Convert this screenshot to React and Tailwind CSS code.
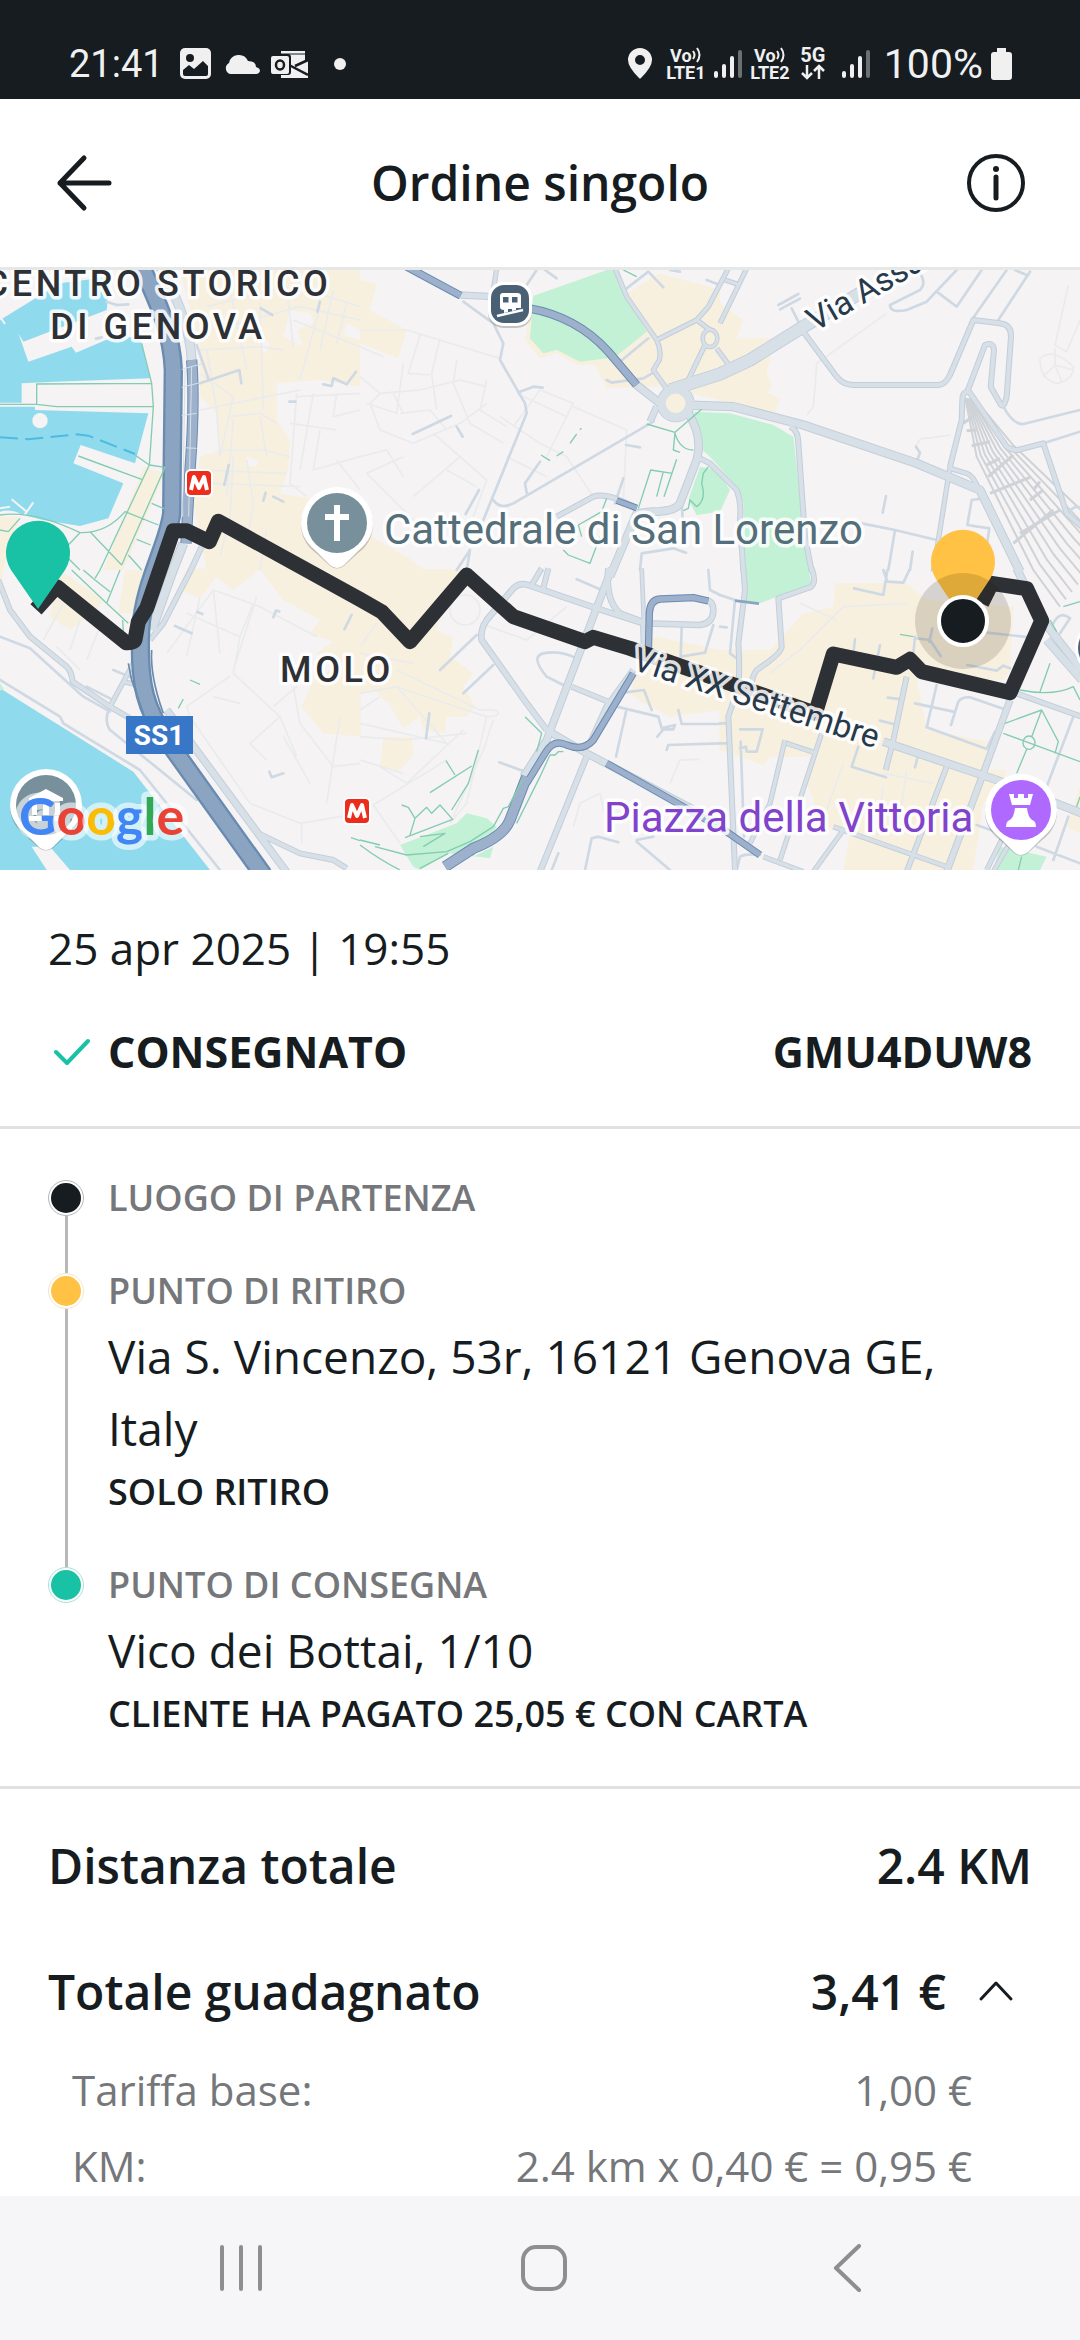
const A = [0, 0];
const B = [1080, 0];
const C = [2160, 0];
const D = [0, 900];
const E = [1080, 900];
const F = [2160, 900];

const water = [
  [A, "M0,150 L180,40 L330,20 L320,120 L70,215 L55,190 L85,275 L215,230 L228,248 L330,205 L420,200 L450,325 L165,335 L65,340 L65,398 L0,398Z"],
  [A, "M0,410 L105,410 L105,420 L445,430 L405,580 L242,525 L220,580 L370,640 L325,745 L240,768 L130,750 L70,735 Q30,715 0,725Z"],
  [D, "M0,355 L400,605 L630,900 L210,900 L150,830 L95,830 L140,900 L0,900Z"],
];

const commercial = [
  [A, "M540,0 L1080,0 L1080,350 L960,330 L830,340 L830,450 L870,510 L865,600 L840,670 L950,690 L1080,760 L1080,900 L620,900 L580,700 L600,560 L660,540 L650,430 L600,380 L600,230Z"],
  [A, "M430,590 L495,610 L370,900 L310,900Z"],
  [A, "M0,740 L60,740 L20,850 L0,960Z"],
  [B, "M-2,30 L50,40 L30,120 L140,180 L115,265 L-2,220Z"],
  [B, "M0,780 L140,860 L200,905 L0,905Z"],
  [B, "M520,75 L770,0 L800,70 L900,10 L1080,60 L1080,390 L900,350 L740,355 L705,285 L650,285 L590,250 L540,265 L495,210Z"],
  [C, "M-2,100 L70,150 L50,205 L165,205 L140,310 L155,345 L145,370 L180,385 L165,430 L-2,400Z"],
  [D, "M180,0 L310,90 L280,130 L210,180 L150,140Z"],
  [D, "M375,0 L430,0 L395,130 L355,130Z"],
  [D, "M560,-5 L780,-5 L740,30 L700,60 L650,20 L600,85 L540,60Z"],
  [D, "M780,-2 L1082,-2 L1082,500 L970,490 L905,410 L940,330 L1010,290 L950,250 L1000,215 L930,190 L960,150 L850,90Z"],
  [E, "M-2,-2 L310,-2 L260,90 L230,180 L280,205 L270,260 L340,310 L310,350 L345,410 L320,440 L260,440 L255,490 L190,480 L180,440 L130,475 L85,400 L40,360 L-2,370Z"],
  [E, "M70,500 L155,500 L160,555 L120,600 L60,595Z"],
  [E, "M860,210 L890,200 L1082,240 L1082,420 L930,440 L850,400 L810,370Z"],
  [F, "M345,40 L560,40 L620,90 L880,110 L870,300 L850,330 L590,320 L620,480 L830,520 L790,600 L860,600 L850,640 L790,700 L760,900 L370,900 L390,790 L310,770 L260,640 L270,560 L150,560 L130,585 L-2,540 L-2,240 L150,240 L250,130 L340,110Z"],
  [F, "M1040,770 L1080,650 L1080,790Z"],
];

const parks = [
  [B, "M520,78 L740,0 L760,0 L860,185 L765,262 L660,275 L590,240 L550,250 L510,205Z"],
  [B, "M1000,425 L1110,430 L1240,465 L1300,500 L1340,860 L1355,950 L1250,980 L1200,1000 L1160,995 L1150,700 L1130,650 L1050,560 L1015,530Z"],
  [B, "M1020,590 L1070,600 L1110,660 L1080,725 L1010,735 L985,690Z"],
  [E, "M120,825 L290,760 L320,730 L380,745 L410,770 L340,860 L400,830 L390,865 L265,850 L180,900 L160,890Z"],
  [F, "M840,830 L980,860 L960,900 L820,900Z"],
  [D, "M0,340 L12,358 L0,362Z"],
];

const lanes = [
  [A, "M620,110 L860,50 M640,180 L900,110 L1080,150 M600,240 L780,230 L850,240 M690,60 L740,300 M780,100 L790,420 M860,50 L880,230 M960,110 L900,330 M600,310 L700,380 L660,560 M690,440 L780,430 L830,460 M660,540 L790,540 L870,560 M700,450 L680,680 M780,440 L800,560 M600,420 L900,360 M600,600 L860,610 M640,640 L900,650 M700,560 L690,740 M740,570 L760,700 M890,370 L870,640 M940,370 L900,600 M890,380 L1080,370 M1010,370 L1000,440 L1080,420 M870,460 L1010,480 M960,480 L940,600 L1080,560 M1010,570 L1080,660 M870,640 L920,680 M760,700 L740,820 M690,740 L660,860 M800,780 L780,900 M620,240 L650,420 L660,560"],
  [A, "M880,150 L1080,230 M920,60 L1080,110 M1000,60 L960,240 M1040,100 L1010,220"],
  [B, "M0,180 L140,180 L420,265 M180,195 L145,310 L210,315 M240,205 L215,310 L230,420 M0,320 L60,370 L180,360 L300,330 L380,350 M60,370 L30,400 L60,480 L160,520 M120,430 L210,420 L260,480 M20,400 L110,430 L130,280 M0,560 L80,540 L130,620 M100,370 L130,430 M290,270 L280,340 L330,460 L430,520 M380,330 L360,420 L440,470 M160,520 L300,460 L380,400 M220,490 L380,630 L340,740 M160,680 L300,560 M130,560 L20,610 L170,760 M420,440 L540,520 M470,370 L620,440 L640,400 L540,360 L460,470 M540,520 L620,560 L700,680 M620,440 L560,560 M640,410 L800,480 L790,690 L840,720 M260,600 L350,650 M440,560 L560,620 M0,230 L70,260"],
  [C, "M500,130 L290,280 L285,350 L280,410 L260,435 M590,540 Q590,500 620,505 L690,495 M960,265 Q1000,230 1060,290 Q1060,330 1010,340 Q960,330 960,265 M1005,285 L1005,235 M1005,285 L1060,300 M1005,285 L970,320 M1005,285 L1025,335 M1045,45 L1005,225 L1040,245 L1080,150"],
  [D, "M500,250 L640,60 L780,110 L950,200 M560,130 L720,200 L760,100 M600,80 L560,260 M640,60 L660,250 M720,200 L700,310 L840,440 L890,560 M690,318 L560,410 L570,440 L750,700 L900,760 L1080,730 M640,380 L720,400 M840,440 L750,520 L800,570 M850,500 L930,640 M770,80 L700,300 M820,410 L890,350 L860,270 M880,350 L900,460 L1000,590 L1080,580 M1020,440 L980,700 M905,760 L905,820 M190,100 L130,210 M240,150 L210,240 M170,230 L240,300 M300,170 L260,270"],
  [E, "M0,370 L110,350 L380,440 L320,700 L270,760 M110,350 L260,520 L0,460 M0,500 L130,510 L320,490 M0,420 L60,380 M400,450 L370,540 L280,740 M60,590 L140,640 L310,480 M0,570 L130,610 M40,705 L260,570 M40,705 L120,820 M380,440 Q410,440 415,430 Q415,415 360,420 L110,300 M0,250 L160,280 M50,160 L0,230 M270,120 A45 45 0 1 0 360,120 A45 45 0 1 0 270,120 M360,160 L500,210 L620,110 M640,770 L660,700 L720,670 L740,760 M930,640 L960,570 L1020,568"],
  [F, "M240,240 L370,110 L560,100 M150,310 L250,230 M240,100 L350,150 M490,610 L640,640 M490,650 L470,800 M560,600 L540,740 M370,580 L320,720"],
];

const thin = [
  [A, "M320,95 L350,105 L385,103 M600,340 L718,300 L724,340 M590,225 L625,325 M970,343 L995,348 L1000,325 L1040,343 L1068,305 M783,115 L817,135 M960,95 L952,125 M868,395 L886,395 M686,585 L673,645 M797,668 L790,692 M820,680 L850,695 M288,206 L305,202"],
  [B, "M310,95 L400,160 L430,220 L420,270 L495,400 L500,430 L370,750 M400,690 Q420,720 460,700 L880,455 M480,365 L520,350 L548,353 M540,575 L495,640 L500,668 M158,492 L273,438 M290,470 L308,500 M317,732 L357,660 M798,525 L840,532 M790,625 L765,700 M780,275 L865,205 M740,330 L755,338 L850,325 L885,305 M800,55 L865,5 L910,52 M500,45 L530,0 M555,0 L590,25 M840,900 L845,850 L940,835 L978,848 M965,700 L968,745 M930,0 L960,5 M1040,30 L1080,45 M290,900 L330,840 M320,900 L330,840"],
  [C, "M850,410 Q880,465 910,462 L1080,420 M970,520 L1080,485 M650,65 L710,110 L785,0 M510,105 Q510,130 560,120 L620,95 L710,0 M510,105 L600,60 Q620,40 600,10 M755,150 L860,0 M835,150 L930,5 M885,0 L920,15 M590,575 L600,548 L588,530 M498,678 L488,728 M425,760 L525,780 L650,810 M525,780 L505,900 M578,845 L570,900 M808,775 L742,765 L755,690 L790,685 M808,775 L800,830 M215,115 L240,165 M175,105 L235,72 M180,118 L240,86 M1045,730 Q1060,705 1080,712"],
  [D, "M0,200 L90,235 L250,380 L330,425 M0,330 L180,440 L190,460 L420,600 L660,900 M330,410 Q310,450 330,480 L430,560 L590,690 M260,350 L330,385 M340,300 L400,325 M525,168 L575,190 M592,126 L607,132 M820,142 L828,122 L838,124 M1055,135 L1033,178 M808,605 L815,622 L850,610"],
  [E, "M610,345 L560,320 Q510,260 550,250 Q600,240 650,265 M240,300 L350,195 M310,370 L400,285 M208,430 L198,505 M418,577 L500,607 M650,28 L720,58 M798,425 L768,560 M770,410 L895,440 L905,475 L945,465 L940,478 L910,478 L892,500 M790,368 L852,360 L875,420 M955,420 L965,462 L1080,462 M920,540 L925,525 L1080,520 M965,175 L962,260 L1035,248 L1060,165 M675,900 L695,805 L715,800 L775,817 M830,815 L930,900 M830,810 L880,800 M595,850 L575,900 M1045,0 L1050,60 L1080,75"],
  [F, "M490,0 L502,35 L550,38 L568,0 M402,55 L490,75 L502,0 M405,208 L400,250 M480,225 L460,325 M585,200 L575,300 M590,205 L630,210 L662,258 M637,175 L628,215 M742,285 L830,302 L850,287 L870,295 M800,188 L940,203 M503,383 L545,388 M585,400 L700,425 M693,465 L715,395 Q725,380 750,382 L860,420 M650,345 L620,472 L800,537 L825,485 M480,452 L520,462 M395,590 L498,622 M415,530 L395,590 M592,565 L585,592 M60,478 L128,478 L110,545 L80,545 L78,530 L60,535 M62,515 L72,800 M1060,440 L980,650 M770,765 L840,790 M950,830 L1080,880 M1045,740 L1000,870 M0,75 L45,90 L30,250 L50,265 M0,170 L20,172 M0,460 L20,460 M0,520 L20,520 M50,900 L60,860 Q80,850 120,855 M1000,160 Q1020,120 1050,145 L1020,190"],
];

const roads = [
  [16, B, "M1010,560 L1050,580 L1130,660 Q1145,700 1140,750 L1150,905"],
  [16, F, "M70,-5 L75,60 L55,220 Q60,300 55,350 L25,440 L45,900"],
  [14, B, "M410,-5 L400,60"],
  [14, B, "M765,-5 L800,80 L890,210 Q905,240 898,270 L880,300 L930,370"],
  [14, B, "M890,210 L1010,150 L1045,110 L1105,-5"],
  [14, B, "M1010,150 L1050,180 M1035,225 L970,360 M1070,235 L1110,290"],
  [12, B, "M1028,205 A22 26 0 1 0 1072,205 A22 26 0 1 0 1028,205"],
  [14, B, "M1160,-5 L1080,160 M1095,30 L1140,45"],
  [16, B, "M590,740 L700,680 Q740,665 830,715"],
  [20, B, "M400,80 L300,75"],
  [16, C, "M250,185 L350,320 Q370,345 400,345 L655,345 Q675,345 690,315 L760,150 L840,160 Q875,165 873,200 L860,380 Q850,420 840,400 L812,350 L822,240 Q820,215 795,225 L740,370"],
  [16, C, "M690,590 L725,450 L727,390 Q728,362 748,366 L860,530 Q880,545 900,538 L970,520 L1040,730 L1085,770"],
  [14, C, "M690,590 L640,905 M690,595 L740,610 Q765,620 775,660"],
  [16, C, "M210,470 Q235,480 235,520 L255,800 L275,905"],
  [16, F, "M275,-5 Q295,50 260,55 L175,85 L185,230 Q185,250 110,300 Q95,320 95,350"],
  [26, C, "M-110,405 L40,410 L250,465 L590,580 L780,660 L900,905"],
  [24, F, "M890,-5 L960,140 L1085,300 M980,210 L1085,330"],
  [38, C, "M-150,360 L0,312 L90,270 L250,170 L420,70"],
  [24, B, "M830,345 L900,400"],
  [24, B, "M985,430 Q1030,500 1010,570 L960,700 Q945,725 880,725 L830,730 L750,920"],
  [20, B, "M870,455 L890,410"],
  [22, E, "M755,-5 L700,140 L560,510 L490,620"],
  [18, E, "M680,560 L540,905"],
  [18, E, "M560,480 L500,400 L365,210 Q360,180 380,150 L460,55 Q480,35 510,47 L710,115 L850,160"],
  [22, E, "M560,480 L680,550 L1080,760"],
  [16, E, "M635,350 L745,395 M565,-5 L550,55 M545,-5 L515,45 M660,0"],
  [18, E, "M745,-5 Q735,90 780,130 L860,160 L1020,165 Q1060,160 1060,120 Q1060,95 1040,90"],
  [18, E, "M850,160 L852,230 M820,300 L740,410 L690,520"],
  [12, E, "M845,-5 L852,160"],
  [24, F, "M490,515 L830,630 L1085,730"],
  [16, F, "M560,320 L520,510 L497,600"],
  [20, F, "M870,390 L790,610 L680,905"],
  [16, F, "M680,590 L560,905 M875,365 L1085,440"],
  [14, F, "M305,490 L180,870 M200,520 L290,550 M195,510 L150,700 L90,820 M370,780 L280,905"],
  [14, F, "M340,770 L680,890 M130,860 L250,905 M880,800 L820,905 M800,900 L860,780"],
  [16, D, "M-5,30 L30,120 L90,200 L200,290 Q215,305 218,335 L330,410 L390,445"],
  [14, D, "M400,280 L330,410 M370,335 L405,343"],
  [16, D, "M775,790 L900,850 L1000,870 L1040,895"],
  [16, A, "M605,830 L575,895 L490,1060 L450,1110"],
  [28, A, "M480,-10 Q570,150 575,270 M550,820 L515,910 L455,1080"],
  [22, D, "M500,420 L870,920"],
];

const highways = [
  [34, "#9db1cc", A, "M575,270 Q585,400 570,600 L558,820"],
  [58, "#8aa4c1", A, "M425,-10 C470,90 515,180 520,300 L515,730 C505,820 430,940 422,1080 C415,1250 440,1320 500,1410 L790,1815"],
  [24, "#9db1cc", B, "M140,-10 L302,77"],
  [26, "#9db1cc", B, "M505,115 Q650,140 745,245 L830,345"],
  [20, "#9db1cc", B, "M770,692 L830,714"],
  [22, "#9db1cc", E, "M865,250 L868,130 Q870,90 900,87 L1000,83 L1045,93"],
  [22, "#9db1cc", E, "M820,310 L700,510 Q670,545 620,525 Q580,505 555,550 L500,640"],
  [34, "#9db1cc", E, "M500,620 L450,750 Q430,800 340,835 L255,890"],
  [22, "#9db1cc", E, "M740,580 L1085,775 L1200,855"],
];

const paths = [
  [A, "M0,403 L110,403 L170,410 L460,410 L455,340 L425,220 M110,403 L110,342 L455,340 M460,410 L448,585 L300,900 M235,558 L425,628 M448,585 L495,592 L365,885 M448,585 L405,555 M0,735 Q100,720 240,788 Q320,790 375,725 L475,765 M270,785 L365,885 M240,788 L200,830 M455,700 L492,716 M410,808 L452,825 M385,855 L425,900 M200,860 L240,900 M0,780 L25,785 L60,745"],
  [D, "M215,0 L320,100 L385,160 M250,0 L285,30 L330,65 M360,0 L320,100 M300,0 L285,25 M368,150 L370,185 M570,330 L600,343 M550,387 L535,415 M1053,803 L1080,812"],
  [B, "M860,462 L945,487 L1025,418 M945,487 L940,540 L960,547 M945,490 Q960,540 1000,540 M835,715 L872,600 L937,610 M950,568 L912,680 M910,605 L890,680 M740,685 L725,725 L655,765 L665,800 M610,840 L625,855 L690,880 L720,800 M543,555 L570,572 M590,558 L610,545 M630,520 L650,492 M660,480 L664,474 M1045,590 L1030,610 L1025,640 Q1040,690 1010,710 L990,690 L985,715 L970,722 M790,0 L830,20"],
  [E, "M495,440 L545,490 L530,545 M355,540 L325,640 L275,720 M210,668 L335,588 M258,572 L285,615 M125,705 L145,712 L165,745 L200,712 L215,730 L240,705 L278,748 L135,803 M165,745 L150,795 M0,810 L60,825 M45,830 L140,855 L260,845 L330,815 L400,770 L430,715 L445,710 L490,625 M180,895 L265,850 M0,825 Q60,870 120,900 M180,800 L255,790 L190,830 M610,545 L595,545 L585,555 L570,555 L540,620 L470,760"],
  [F, "M850,490 L1080,575 M855,460 L965,420 L1015,515 L1005,550 M965,420 L935,500 M909,518 A18 20 0 1 0 945,518 A18 20 0 1 0 909,518 M920,538 L890,610 M900,360 Q1000,380 1060,350 L1080,390 M990,280 L960,365 M1030,110 L1080,95 M990,150 L1010,185 M540,193 L580,200 M905,860 L895,900 M1080,680 L1070,710"],
];

const at = (t) => `translate(${t[0]} ${t[1]})`;

function Layer({ items, ...rest }) {
  return (
    <g {...rest}>
      {items.map(([t, d], i) => (
        <path key={i} transform={at(t)} d={d} />
      ))}
    </g>
  );
}

function PoiPin({ x, y, color, children }) {
  return (
    <g transform={`translate(${x} ${y})`}>
      <path d="M-36,2 a36 36 0 1 1 72 0 c0 14 -8 23 -16 29 L7,43 q-7 5 -14 0 L-20,31 C-28,25 -36,16 -36,2Z" fill="#0003" />
      <path d="M-36,0 a36 36 0 1 1 72 0 c0 14 -8 22 -16 29 L7,42 q-7 6 -14 0 L-20,29 C-28,22 -36,14 -36,0Z" fill="#fff" />
      <circle r="30" fill={color} />
      {children}
    </g>
  );
}

function Metro({ x, y }) {
  return (
    <g transform={`translate(${x} ${y})`}>
      <rect x="-14" y="-14" width="28" height="28" rx="6" fill="#fff" />
      <rect x="-12" y="-12" width="24" height="24" rx="4" fill="#ec2d1b" />
      <path d="M-8,7 L-5,-6 L0,5 L5,-6 L8,7" fill="none" stroke="#fff" strokeWidth="4" strokeLinejoin="round" />
    </g>
  );
}

function RouteMap() {
  const rails = [0, 1, 2, 3, 4, 5, 6, 7, 8, 9];
  return (
    <svg viewBox="0 0 1080 600" className="block w-full" role="img" aria-label="Mappa del percorso">
      <rect width="1080" height="600" fill="#f5f3f4" />
      <g transform="scale(0.33333333)" strokeLinejoin="round">
        <Layer items={water} fill="#90daee" />
        <circle cx="120" cy="452" r="23" fill="#f5f3f4" />
        <path d="M0,502 L85,508 L230,493 L265,497 L405,552" fill="none" stroke="#4dbbe0" strokeWidth="6" strokeDasharray="54 22" />
        <path d="M35,688 L80,725 M100,697 L70,740 M0,715 L30,710 M0,140 L15,162" fill="none" stroke="#f5f3f4" strokeWidth="6" />
        <Layer items={commercial} fill="#f8f0df" />
        <path d="M870,120 L930,130 L940,160 L890,180 L910,230 L850,200Z M740,560 L775,570 L770,590 L735,585Z M780,200 L810,220 L800,250 L780,240Z M1040,160 L1080,180 L1080,210 L1030,195Z" fill="#f5f3f4" />
        <Layer items={parks} fill="#c3f1d5" />
        <Layer items={lanes} fill="none" stroke="#e9ebed" strokeWidth="5" />
        <g fill="none" stroke="#cfd2d6" strokeWidth="6">
          {rails.map((i) => (
            <path key={i} d={`M${2896 + i * 3},385 L${2930 + i * 12},${560 - i * 4} L${3100 + i * 20},${900 - i * 16} L${3180 + i * 18},${1010 - i * 22}`} />
          ))}
          <path d="M2890,460 L2930,432 M2900,482 L2930,480 M2915,527 L2970,515 M2960,585 L3000,565 M2965,620 L3040,555 M2970,670 L3090,622 M3090,690 L3130,660 M3040,820 L3160,720 M3060,790 L3180,720 M3100,660 L3120,635" strokeWidth="9" />
        </g>
        <Layer items={thin} fill="none" stroke="#cfd9e3" strokeWidth="8" strokeLinecap="round" />
        <g fill="none" stroke="#c3cedb">
          {roads.map(([w, t, d], i) => (
            <path key={i} transform={at(t)} d={d} strokeWidth={w + 2} />
          ))}
          <circle cx="2027" cy="400" r="42" strokeWidth="30" />
        </g>
        <g fill="none" stroke="#d7e0e7">
          {roads.map(([w, t, d], i) => (
            <path key={i} transform={at(t)} d={d} strokeWidth={w - 4} />
          ))}
          <circle cx="2027" cy="400" r="42" strokeWidth="25" fill="#f8f0df" />
        </g>
        <g fill="none">
          {highways.map(([w, c, t, d], i) => (
            <path key={i} transform={at(t)} d={d} strokeWidth={w} stroke="#6a8bb0" />
          ))}
          {highways.map(([w, c, t, d], i) => (
            <path key={i} transform={at(t)} d={d} strokeWidth={w > 40 ? w - 14 : w - 6} stroke={c} />
          ))}
        </g>
        <path d="M545,298 L610,280 M545,352 L600,338 M545,437 L590,430 M548,533 L590,535 M555,300 L548,740 M575,290 L566,740" fill="none" stroke="#d7e0e7" strokeWidth="3" />
        <path d="M385,1180 L395,1230 L430,1330 M455,1140 Q450,1220 490,1330" fill="none" stroke="#6a8bb0" strokeWidth="5" />
        <path d="M2205,992 L2277,1001" fill="none" stroke="#8aa4c1" strokeWidth="8" />
        <Layer items={paths} fill="none" stroke="#83ccb2" strokeWidth="4" />
        <path
          d="M108,1018 L170,950 L378,1118 Q405,1120 406,1104 L415,1055 L440,1015 L520,782 L560,782 L628,815 L655,754 L1080,988 L1145,1025 L1230,1115 L1400,915 L1540,1040 L1755,1115 L1780,1102 L1890,1135 L2446,1330 L2500,1152 L2690,1192 L2730,1168 L2765,1205 L3030,1268 L3125,1052 L3080,956 L2975,940 L2945,1000"
          fill="none"
          stroke="#2d3034"
          strokeWidth="45"
        />
      </g>

      <g fill="none" stroke="#ffffffd9" strokeWidth="7" strokeLinejoin="round" className="font-['Roboto',sans-serif]" style={{ paintOrder: "stroke" }}>
        <g fill="#2d3034" fontSize="36" fontWeight="500" textAnchor="middle" className="tracking-widest">
          <text x="158" y="26">CENTRO STORICO</text>
          <text x="158" y="69">DI GENOVA</text>
          <text x="337" y="412">MOLO</text>
        </g>
        <g fontSize="42">
          <text x="384" y="274" fill="#546e7a">Cattedrale di San Lorenzo</text>
          <text x="604" y="562" fill="#8142cc">Piazza della Vittoria</text>
        </g>
        <g fill="#28394a" fontSize="33">
          <text transform="translate(631 399) rotate(18)">Via XX Settembre</text>
          <text transform="translate(815 62) rotate(-30)">Via Assa</text>
        </g>
      </g>

      <rect x="126" y="446" width="67" height="38" fill="#3877c8" />
      <text x="159" y="475" textAnchor="middle" fontSize="28" fontWeight="700" fill="#fff" className="font-['Roboto',sans-serif]">SS1</text>

      <Metro x={199} y={213} />
      <Metro x={357} y={541} />

      <g transform="translate(510 34)">
        <rect x="-22" y="-20" width="44" height="44" rx="15" fill="#0003" />
        <rect x="-22" y="-22" width="44" height="44" rx="15" fill="#fff" />
        <rect x="-19" y="-19" width="38" height="38" rx="13" fill="#4a6175" />
        <path d="M-10,-8 q0,-3 3,-3 h14 q4,0 4,3 v12 h-5 v2 l-4,1 v-2 h-4 v3 l-4,1 v-3 q-4,0 -4,-3Z" fill="#fff" />
        <path d="M-7,-7 h5.500 v5.500 h-5.500Z M2,-7 h5.500 v5.500 h-5.500Z" fill="#4a6175" />
        <path d="M-13,12 L13,6" stroke="#fff" strokeWidth="2.500" />
      </g>

      <PoiPin x={337} y={253} color="#78909c">
        <path d="M-3,-18 h6 v9 h9 v6 h-9 v21 h-6 v-21 h-9 v-6 h9Z" fill="#fff" />
      </PoiPin>
      <PoiPin x={1021} y={540} color="#b069ff">
        <path d="M-12,-16 h5 v4 h4 v-4 h6 v4 h4 v-4 h5 l-3,11 h-18Z M-6,-2 h12 q1,9 5,12 q4,1 4,7 h-30 q0,-6 4,-7 q4,-3 5,-12Z" fill="#fff" />
      </PoiPin>
      <PoiPin x={46} y={535} color="#78909c">
        <path d="M0,-16 L17,-7 V-4 H-17 V-7Z M-14,-2 h5 v12 h-5Z M-3,-2 h6 v12 h-6Z M9,-2 h5 v12 h-5Z M-17,11 h34 v5 h-34Z" fill="#fff" />
      </PoiPin>
      <circle cx="1103" cy="378" r="28" fill="#fff" />
      <circle cx="1103" cy="378" r="25" fill="#4a6175" />

      <path d="M38,339 L11,300 A32 32 0 1 1 65,300Z" fill="#19c2a4" />
      <path d="M963,350 L936,309 A32 32 0 1 1 990,309Z" fill="#ffc244" />
      <circle cx="963" cy="351" r="48" fill="#29190026" />
      <circle cx="963" cy="351" r="24" fill="#161c20" stroke="#fff" strokeWidth="4" />

      <text x="19" y="565" fontSize="52" fontWeight="700" stroke="#ffffff99" strokeWidth="11" strokeLinejoin="round" style={{ paintOrder: "stroke" }} className="font-['Lato',sans-serif]">
        <tspan fill="#4285f4">G</tspan>
        <tspan fill="#ea4335">o</tspan>
        <tspan fill="#fbbc05">o</tspan>
        <tspan fill="#4285f4">g</tspan>
        <tspan fill="#34a853">l</tspan>
        <tspan fill="#ea4335">e</tspan>
      </text>
    </svg>
  );
}

function SignalBars() {
  return (
    <svg viewBox="0 0 28 32" className="h-8 w-7" fill="none" strokeWidth="4" strokeLinecap="round" stroke="#f0f0f0" aria-hidden="true">
      <path d="M2,25 V28 M10,18 V28 M18,10 V28" />
      <path d="M26,4 V28" stroke="#6b7073" />
    </svg>
  );
}

function VoLte({ n }) {
  return (
    <div className="flex w-10 flex-col items-center text-[18px] leading-[17px] font-bold">
      <span className="flex items-center">
        Vo
        <svg viewBox="0 0 10 16" className="h-4 w-[10px]" fill="none" stroke="currentColor" strokeWidth="2" aria-hidden="true">
          <path d="M1,4 Q4,8 1,12 M5,1 Q10,8 5,15" />
        </svg>
      </span>
      <span>LTE{n}</span>
    </div>
  );
}

function StatusBar() {
  return (
    <div className="flex h-[99px] shrink-0 items-center justify-between bg-[#161c20] pt-7 pr-[68px] pl-[69px] font-['Roboto',sans-serif] text-[#f0f0f0]">
      <div className="flex items-center">
        <span className="mr-4 text-[38px] leading-8">21:41</span>
        <svg viewBox="0 0 31 31" className="mr-[13px] h-[31px] w-[31px]" aria-hidden="true">
          <rect width="31" height="31" rx="5" fill="#f0f0f0" />
          <circle cx="10" cy="10" r="4" fill="#161c20" />
          <path d="M3,22 L9,17 L14,21 L23,13 L28,18 V26 Q28,28 26,28 H5 Q3,28 3,26Z" fill="#161c20" />
        </svg>
        <svg viewBox="0 0 36 20" className="mr-[11px] h-5 w-9" fill="#f0f0f0" aria-hidden="true">
          <path d="M6,20 A6 6 0 0 1 5,9 A10 10 0 0 1 24,7 Q32,7 32,13 Q36,14 36,17 Q35,20 32,20Z" />
        </svg>
        <svg viewBox="0 0 37 30" className="h-[30px] w-[37px]" aria-hidden="true">
          <path d="M10,2 H34 V13 L37,12 V29 H10Z" fill="#f0f0f0" />
          <path d="M10,5 H34" stroke="#161c20" strokeWidth="1" />
          <path d="M37,11 L24,17 M18,16 L37,26" stroke="#161c20" strokeWidth="2.500" />
          <rect x="-1" y="5" width="21" height="21" rx="3" fill="#161c20" />
          <rect x="0" y="7" width="18" height="18" rx="2" fill="#f0f0f0" />
          <ellipse cx="9" cy="16" rx="4" ry="4.500" fill="none" stroke="#161c20" strokeWidth="2.500" />
        </svg>
        <span className="ml-[26px] h-3 w-3 rounded-full bg-[#f0f0f0]" />
      </div>
      <div className="flex items-center">
        <svg viewBox="0 0 24 31" className="mr-[14px] h-[31px] w-6" aria-hidden="true">
          <path fillRule="evenodd" d="M12,0 A12 12 0 0 1 24,12 Q24,19 13,30 Q12,31 11,30 Q0,19 0,12 A12 12 0 0 1 12,0Z M12,7 A5 5 0 1 0 12,17 A5 5 0 1 0 12,7Z" fill="#f0f0f0" />
        </svg>
        <VoLte n={1} />
        <span className="ml-2"><SignalBars /></span>
        <span className="ml-2"><VoLte n={2} /></span>
        <div className="ml-[10px] flex w-[26px] flex-col items-center text-[20px] leading-[17px] font-bold">
          <span>5G</span>
          <svg viewBox="0 0 24 16" className="h-4 w-6" fill="none" stroke="currentColor" strokeWidth="2.500" aria-hidden="true">
            <path d="M6,1 V14 M1,9 L6,14 L11,9 M18,15 V2 M13,7 L18,2 L23,7" />
          </svg>
        </div>
        <span className="mr-[14px] ml-4"><SignalBars /></span>
        <span className="mr-2 text-[41px] leading-8">100%</span>
        <svg viewBox="0 0 21 32" className="h-8 w-[21px]" fill="#f0f0f0" aria-hidden="true">
          <path d="M6,0 H15 V4 H18 Q21,4 21,7 V29 Q21,32 18,32 H3 Q0,32 0,29 V7 Q0,4 3,4 H6Z" />
        </svg>
      </div>
    </div>
  );
}

const stops = [
  { label: "LUOGO DI PARTENZA", dot: "bg-[#161c20]", ring: "border-[#b5b7b9]" },
  { label: "PUNTO DI RITIRO", dot: "bg-[#ffc244]", ring: "border-[#f3e6cb]", address: "Via S. Vincenzo, 53r, 16121 Genova GE, Italy", note: "SOLO RITIRO" },
  { label: "PUNTO DI CONSEGNA", dot: "bg-[#19c2a4]", ring: "border-[#a5e3d8]", address: "Vico dei Bottai, 1/10", note: "CLIENTE HA PAGATO 25,05 € CON CARTA" },
];

function Stop({ stop, last }) {
  return (
    <li className="flex gap-6">
      <div className="flex w-9 shrink-0 flex-col items-center">
        <span className={`flex h-9 w-9 items-center justify-center rounded-full border bg-white ${stop.ring}`}>
          <span className={`h-[30px] w-[30px] rounded-full ${stop.dot}`} />
        </span>
        {!last && <span className="w-[3px] flex-1 bg-[#b9b9b9]" />}
      </div>
      <div className={last ? "flex-1" : stop.address ? "flex-1 pb-[47px]" : "flex-1 pb-[57px]"}>
        <h2 className="text-[36px] leading-9 font-semibold text-[#75777a]">{stop.label}</h2>
        {stop.address && (
          <>
            <p className="mt-[11px] text-[46px] leading-[72px]">{stop.address}</p>
            <p className="text-[36px] leading-[56px] font-semibold">{stop.note}</p>
          </>
        )}
      </div>
    </li>
  );
}

export default function App() {
  return (
    <div className="flex h-screen flex-col overflow-hidden bg-white font-['Open_Sans',sans-serif] text-[#161c20]">
      <StatusBar />
      <header className="flex h-[171px] shrink-0 items-center justify-between border-b-3 border-[#e5e8e7] px-[54px]">
        <button type="button" aria-label="Indietro" className="flex h-[60px] w-[60px] items-center justify-center">
          <svg viewBox="0 0 60 60" className="h-[60px] w-[60px]" fill="none" stroke="currentColor" strokeWidth="5" strokeLinecap="round" strokeLinejoin="round">
            <path d="M55,30 H6 M30,5 L6,30 L30,55" />
          </svg>
        </button>
        <h1 className="text-[48px] leading-[64px] font-semibold">Ordine singolo</h1>
        <button type="button" aria-label="Informazioni" className="flex h-[60px] w-[60px] items-center justify-center">
          <svg viewBox="0 0 60 60" className="h-[60px] w-[60px]" fill="none" stroke="currentColor" strokeWidth="5" strokeLinecap="round">
            <circle cx="30" cy="30" r="27" strokeWidth="4" />
            <path d="M30,24 V45" />
            <circle cx="30" cy="16" r="3" fill="currentColor" stroke="none" />
          </svg>
        </button>
      </header>

      <main className="min-h-0 flex-1 overflow-hidden">
        <RouteMap />

        <section className="border-b-3 border-[#e1e1e1] px-12 pt-[46px] pb-[42px]">
          <p className="text-[44px] leading-[64px]">25 apr 2025 | 19:55</p>
          <div className="mt-10 flex h-16 items-center text-[43px] font-bold">
            <svg viewBox="0 0 36 40" className="mr-[18px] ml-[6px] h-10 w-9" fill="none" stroke="#19c2a4" strokeWidth="4" strokeLinecap="round" strokeLinejoin="round" aria-hidden="true">
              <path d="M2,20 L13,31 L34,9" />
            </svg>
            <span className="flex-1">CONSEGNATO</span>
            <span>GMU4DUW8</span>
          </div>
        </section>

        <ol className="border-b-3 border-[#e1e1e1] px-12 pt-[51px] pb-11">
          {stops.map((stop, i) => (
            <Stop key={stop.label} stop={stop} last={i === stops.length - 1} />
          ))}
        </ol>

        <section className="px-12 pt-[45px]">
          <div className="flex justify-between text-[48px] leading-[64px] font-semibold">
            <h2>Distanza totale</h2>
            <p>2.4 KM</p>
          </div>
          <button type="button" aria-expanded="true" className="mt-[62px] flex w-full items-center text-left text-[48px] leading-[64px] font-semibold">
            <span className="flex-1">Totale guadagnato</span>
            <span>3,41 €</span>
            <svg viewBox="0 0 36 36" className="mr-[18px] ml-8 h-9 w-9" fill="none" stroke="currentColor" strokeWidth="3" strokeLinecap="round" strokeLinejoin="round" aria-hidden="true">
              <path d="M3,25 L18,9 L33,25" />
            </svg>
          </button>
          <dl className="mt-7 pr-[60px] pl-6 text-[42px] leading-[76px] text-[#75777a]">
            <div className="flex justify-between">
              <dt>Tariffa base:</dt>
              <dd>1,00 €</dd>
            </div>
            <div className="flex justify-between">
              <dt>KM:</dt>
              <dd>2.4 km x 0,40 € = 0,95 €</dd>
            </div>
          </dl>
        </section>
      </main>

      <nav className="grid h-36 shrink-0 grid-cols-3 items-center justify-items-center bg-[#f6f6f8] pr-[82px] pl-[90px] text-[#8e8e90]">
        <button type="button" aria-label="App recenti">
          <svg viewBox="0 0 48 48" className="h-12 w-12" fill="none" stroke="currentColor" strokeWidth="4" strokeLinecap="round">
            <path d="M5,3 V45 M24,3 V45 M43,3 V45" />
          </svg>
        </button>
        <button type="button" aria-label="Home">
          <svg viewBox="0 0 48 48" className="h-12 w-12" fill="none" stroke="currentColor" strokeWidth="4">
            <rect x="3" y="3" width="42" height="42" rx="13" />
          </svg>
        </button>
        <button type="button" aria-label="Indietro di sistema">
          <svg viewBox="0 0 48 48" className="h-12 w-12" fill="none" stroke="currentColor" strokeWidth="4" strokeLinecap="round" strokeLinejoin="round">
            <path d="M36,2 L13,24 L36,46" />
          </svg>
        </button>
      </nav>
    </div>
  );
}
